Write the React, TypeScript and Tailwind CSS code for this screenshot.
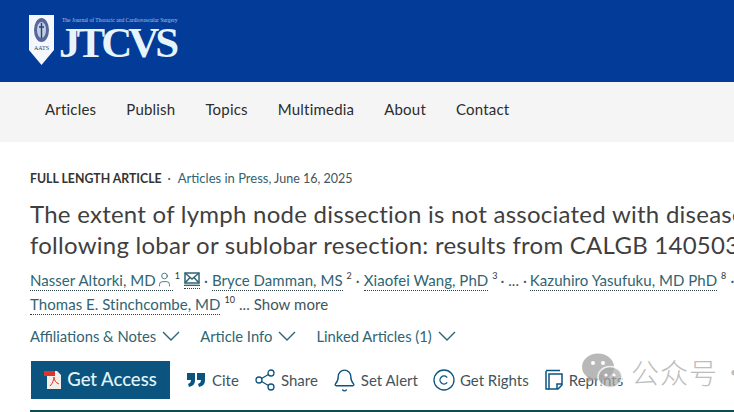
import { User, Share2, Bell, Copyright } from "lucide-react";

const navItems = ["Articles", "Publish", "Topics", "Multimedia", "About", "Contact"];

function Shield() {
  return (
    <svg width="25" height="50" viewBox="0 0 25 50" className="shrink-0">
      <path d="M0 0H25V35L12.5 50L0 35Z" fill="#f4f7fb" />
      <ellipse cx="12.5" cy="15" rx="7.5" ry="12" fill="#56689a" />
      <ellipse cx="12.5" cy="15" rx="4.5" ry="8" fill="#c3cde2" />
      <path d="M12.5 8V23M10 12H15" stroke="#27407f" strokeWidth="1.4" fill="none" />
      <text x="12.5" y="35" textAnchor="middle" fontSize="6" fill="#2b3a66" fontFamily="Liberation Serif">
        AATS
      </text>
    </svg>
  );
}

function Sup({ children }: { children: React.ReactNode }) {
  return <sup className="ml-[4px] text-[9px] text-[#333]">{children}</sup>;
}

function Author({ name, sup }: { name: string; sup?: string }) {
  return (
    <>
      <span className="border-b border-dotted border-[#2a3f45] leading-[20px] text-[#2f6473]">{name}</span>
      {sup && <Sup>{sup}</Sup>}
    </>
  );
}

function Dropdown({ label }: { label: string }) {
  return (
    <span className="flex items-center gap-[6px]">
      {label}
      <svg width="18" height="10" viewBox="0 0 18 10" fill="none" stroke="#2f6473" strokeWidth="1.4">
        <path d="M1 1L9 9L17 1" />
      </svg>
    </span>
  );
}

function Action({ icon, label }: { icon: React.ReactNode; label: string }) {
  return (
    <span className="flex items-center gap-[6px] text-[15px] text-[#44545a]">
      {icon}
      {label}
    </span>
  );
}

export default function App() {
  return (
    <div className="relative h-[412px] w-[734px] overflow-hidden bg-white font-['Lato','Noto_Sans',sans-serif]">
      <header className="flex h-[82px] items-start gap-[3px] bg-[#023c98] pl-[29px] pt-[15px]">
        <Shield />
        <div className="flex flex-col font-['Liberation_Serif',serif]">
          <span className="ml-[5px] text-[5.5px] leading-[10px] text-[#a9c3ea]">
            The Journal of Thoracic and Cardiovascular Surgery
          </span>
          <span className="ml-[2px] mt-[3px] text-[43px] font-bold leading-[30px] tracking-[-4px] text-[#e6f5fb]">
            JTCVS
          </span>
        </div>
      </header>

      <nav className="flex h-[60px] items-center gap-[30px] bg-[#f5f5f5] pb-[6px] pl-[45px] text-[15px] tracking-[0.2px] text-[#2c2c2c]">
        {navItems.map((item) => (
          <span key={item}>{item}</span>
        ))}
      </nav>

      <main className="whitespace-nowrap pl-[30px] pt-[27px]">
        <p className="text-[12.5px] leading-[18px] text-[#44545a]">
          <span className="text-[12.3px] font-bold text-[#333]">FULL LENGTH ARTICLE</span>
          <span className="ml-[6px] mr-[7px]">·</span>
          <span className="text-[13px] text-[#2f6473]">Articles in Press</span>, June 16, 2025
        </p>

        <h1 className="mt-[10px] text-[24px] leading-[31px] tracking-[0.25px] text-[#3f3f3f]">
          The extent of lymph node dissection is not associated with disease-free survival
          <br />
          following lobar or sublobar resection: results from CALGB 140503
        </h1>

        <div className="mt-[8px] text-[15px] tracking-[0.05px] text-[#44545a]">
          <div className="flex h-[24px] items-center">
            <span className="flex items-center border-b border-dotted border-[#2a3f45] leading-[20px] text-[#2f6473]">
              Nasser Altorki, MD
              <User size={17} strokeWidth={1.2} />
            </span>
            <sup className="ml-[2px] text-[9px] text-[#333]">1</sup>
            <span className="ml-[4px] border-b border-dotted border-[#2a3f45] pb-[2px]">
              <svg width="16" height="14" viewBox="0 0 16 14" fill="none" stroke="#2f6473" strokeWidth="1.5">
                <rect x="1" y="1" width="14" height="10" />
                <path d="M1 1L8 7L15 1M1 11L6 5.5M15 11L10 5.5" />
                <path d="M0 13.4H16" />
              </svg>
            </span>
            <span className="mx-[4px]">·</span>
            <Author name="Bryce Damman, MS" sup="2" />
            <span className="mx-[4px]">·</span>
            <Author name="Xiaofei Wang, PhD" sup="3" />
            <span className="mx-[3px]">· ... ·</span>
            <Author name="Kazuhiro Yasufuku, MD PhD" sup="8" />
            <span className="ml-[4px]">·</span>
          </div>
          <div className="flex h-[24px] items-center">
            <Author name="Thomas E. Stinchcombe, MD" sup="10" />
            <span className="ml-[4px]">... Show more</span>
          </div>
        </div>

        <div className="mt-[9px] flex items-center gap-[20px] text-[14.8px] text-[#2f6473]">
          <Dropdown label="Affiliations & Notes" />
          <Dropdown label="Article Info" />
          <Dropdown label="Linked Articles (1)" />
        </div>

        <div className="mt-[14px] flex items-center gap-[16px]">
          <button className="ml-[1px] flex h-[38px] w-[139px] items-center justify-center gap-[5px] bg-[#0b5480] text-[18.5px] font-medium text-[#e3f4f8]">
            <svg width="18" height="20" viewBox="0 0 18 20">
              <path d="M3 1H13L17 5V19H3Z" fill="#f2eeea" />
              <rect x="0" y="1" width="11" height="5" fill="#d8352c" />
              <path d="M6 16C9 13 10 9 10 7C10 10 12 13 15 14" stroke="#d8352c" strokeWidth="1" fill="none" />
            </svg>
            Get Access
          </button>
          <Action
            icon={
              <svg width="20" height="18" viewBox="0 0 20 18" fill="#0b5480">
                <path d="M1 2H9V9C9 13 7 15 3 16L2 13C4 12 5 11 5 9H1Z" />
                <path d="M11 2H19V9C19 13 17 15 13 16L12 13C14 12 15 11 15 9H11Z" />
              </svg>
            }
            label="Cite"
          />
          <Action icon={<Share2 size={24} strokeWidth={1.3} className="-mx-[2px] text-[#0b5480]" />} label="Share" />
          <Action icon={<Bell size={25} strokeWidth={1.3} className="-mx-[2px] text-[#0b5480]" />} label="Set Alert" />
          <Action icon={<Copyright size={24} strokeWidth={1.3} className="-mx-[2px] text-[#0b5480]" />} label="Get Rights" />
          <Action
            icon={
              <svg width="18" height="22" viewBox="0 0 18 22" fill="none" stroke="#0b5480" strokeWidth="1.5">
                <path d="M1 2V20H4M1 1.5H15" />
                <path d="M4 5H17V16L13 20H4Z" />
                <path d="M12 20V15H17" />
              </svg>
            }
            label="Reprints"
          />
        </div>
      </main>

      <div className="absolute bottom-0 left-[30px] right-0 h-[2px] bg-[#0f4a56]" />

      {/* wechat watermark */}
      <div className="absolute left-[582px] top-[353px] flex items-center gap-[9px] whitespace-nowrap text-[#bdbdbd]">
        <svg width="40" height="36" viewBox="0 0 40 36" className="shrink-0">
          <ellipse cx="16" cy="14" rx="16" ry="13.5" fill="#a0a0a0" fillOpacity="0.75" />
          <path d="M6 23L5 30L12 26Z" fill="#a0a0a0" fillOpacity="0.75" />
          <ellipse cx="28" cy="24" rx="12" ry="10.5" fill="#a8a8a8" fillOpacity="0.7" stroke="#fff" strokeOpacity="0.8" strokeWidth="1.5" />
          <circle cx="11" cy="10" r="2" fill="#fff" />
          <circle cx="21" cy="10" r="2" fill="#fff" />
          <circle cx="24" cy="22" r="1.6" fill="#fff" />
          <circle cx="32" cy="22" r="1.6" fill="#fff" />
        </svg>
        <span className="mt-[2px] text-[28px] font-light leading-none tracking-[1px] font-['Noto_Sans_CJK_SC',sans-serif]">
          公众号<span className="ml-[2px]">·</span>
        </span>
      </div>
    </div>
  );
}
